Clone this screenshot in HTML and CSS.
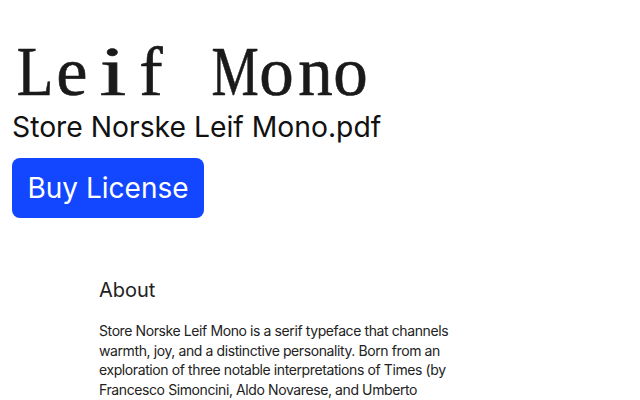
FILE: index.html
```html
<!DOCTYPE html>
<html>
<head>
<meta charset="utf-8">
<link rel="stylesheet" href="styles.css">
</head>
<body>
<main class="page">
  <header class="hero">
    <h1 class="title" aria-label="Leif Mono"><span class="ch ch-l">L</span><span class="ch ch-e">e</span><span class="ch ch-i">i</span><span class="ch ch-f">f</span><span class="ch"> </span><span class="ch ch-m">M</span><span class="ch ch-o1">o</span><span class="ch ch-n">n</span><span class="ch ch-o2">o</span></h1>
    <p class="file">Store Norske Leif Mono.pdf</p>
    <a class="buy" href="#">Buy License</a>
  </header>
  <section class="about">
    <h2 class="about-title">About</h2>
    <p class="about-text">Store Norske Leif Mono is a serif typeface that channels warmth, joy, and a distinctive personality. Born from an exploration of three notable interpretations of Times (by Francesco Simoncini, Aldo Novarese, and Umberto Fenocchio), it blends their character into one family.</p>
  </section>
</main>
</body>
</html>
```
FILE: styles.css
```css
html, body {
  margin: 0;
  padding: 0;
  background: #ffffff;
}
body {
  font-family: "Inter", "Liberation Sans", sans-serif;
  color: #111;
  overflow: hidden;
  height: 400px;
}
.page {
  padding: 37px 12px 0 12px;
}
.hero {
  display: flex;
  flex-direction: column;
  align-items: flex-start;
}
.title {
  margin: 0 0 0 0.5px;
  display: flex;
  font-family: "Liberation Serif", serif;
  font-weight: 400;
  font-size: 69px;
  line-height: 70px;
  color: #1a1a1a;
  -webkit-text-stroke: 0.6px #1a1a1a;
  white-space: pre;
}
.ch {
  display: inline-flex;
  justify-content: center;
  width: 40px;
}
.ch-l {
  transform: translateX(2px) scaleX(0.87);
}
.ch-e {
  transform: translateX(-1px) scaleX(1.02);
}
.ch-i {
  transform: scaleX(1.4);
}
.ch-f {
  transform: translateX(-2px) scaleX(1.02);
}
.ch-m {
  transform: translateX(2px) scaleX(0.77);
}
.ch-o1 {
  transform: translateX(4px);
}
.ch-n {
  transform: translateX(3px);
}
.ch-o2 {
  transform: translateX(-2px);
}
.file {
  margin: 3px 0 0;
  font-size: 28.3px;
  line-height: 34px;
  color: #111;
}
.buy {
  margin-top: 14px;
  display: inline-flex;
  align-items: center;
  justify-content: center;
  width: 192px;
  height: 60px;
  box-sizing: border-box;
  background: #1246ff;
  color: #fff;
  border-radius: 8px;
  font-size: 28px;
  text-decoration: none;
}
.about {
  margin: 58px 0 0 87px;
  width: 352px;
}
.about-title {
  margin: 0;
  font-weight: 400;
  font-size: 20px;
  line-height: 28px;
  color: #222;
}
.about-text {
  margin: 17px 0 0;
  font-size: 14px;
  line-height: 19.7px;
  letter-spacing: -0.4px;
  color: #222;
}
```
